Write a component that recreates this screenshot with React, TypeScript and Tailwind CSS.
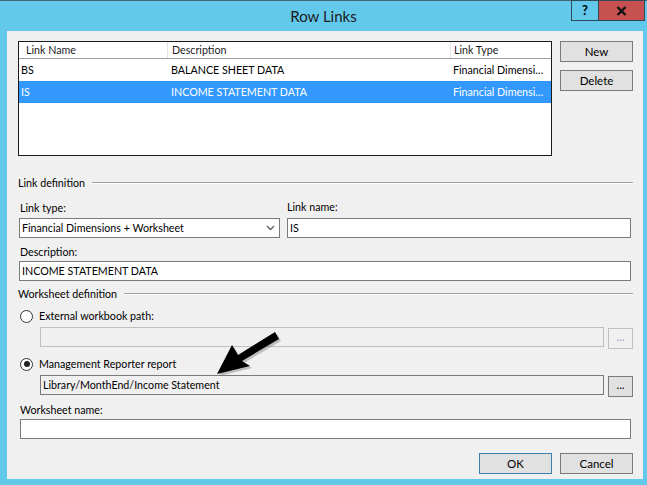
import React from 'react';

const rows = [
  { name: 'BS', desc: 'BALANCE SHEET DATA', type: 'Financial Dimensi\u2026', selected: false },
  { name: 'IS', desc: 'INCOME STATEMENT DATA', type: 'Financial Dimensi\u2026', selected: true },
];

function TitleBar() {
  return (
    <div className="h-[31px] grid grid-cols-[1fr_auto_1fr] border-t border-[#4a6470]">
      <div />
      <div className="pt-[5px] text-[15px] leading-[20px] text-[#1b1b1b]">Row Links</div>
      <div className="flex justify-end pr-[2px]">
        <div className="w-[28px] h-[21px] -mt-[1px] border border-[#2f4a56] flex items-center justify-center text-[13px] font-bold text-black leading-none">
          ?
        </div>
        <div className="w-[47px] h-[21px] -mt-[1px] -ml-[1px] bg-[#c75050] border border-[#2f4a56] flex items-center justify-center">
          <svg width="11" height="10" viewBox="0 0 11 10" aria-hidden>
            <path d="M1.5 1 L9.5 9 M9.5 1 L1.5 9" stroke="#111" strokeWidth="2.4" />
          </svg>
        </div>
      </div>
    </div>
  );
}

function Button({ label, primary = false, disabled = false, className = '' }: { label: string; primary?: boolean; disabled?: boolean; className?: string }) {
  const border = primary ? 'border-[#3c7fb1]' : disabled ? 'border-[#bfbfbf]' : 'border-[#7a7a7a]';
  const bg = disabled ? 'bg-[#f0f0f0]' : 'bg-[#e1e1e1]';
  const color = disabled ? 'text-[#a9a0c8]' : 'text-black';
  return (
    <div className={`border ${border} ${bg} ${color} flex items-center justify-center leading-none text-[11.5px] ${className}`}>
      {label}
    </div>
  );
}

function SectionHeader({ label }: { label: string }) {
  return (
    <div className="h-[16px] flex items-center">
      <span className="leading-none">{label}</span>
      <div className="flex-1 ml-[7px] h-0 border-t border-[#a0a0a0] border-b border-b-white" />
    </div>
  );
}

function Radio({ checked }: { checked: boolean }) {
  return (
    <div className="w-[13px] h-[13px] rounded-full border border-[#333] bg-white flex items-center justify-center">
      {checked && <div className="w-[6px] h-[6px] rounded-full bg-[#222]" />}
    </div>
  );
}

function Arrow() {
  const pts = '279,339 275,332 238,355 232,345 217,374 250,366 242,361';
  return (
    <svg className="absolute left-0 top-0 pointer-events-none" width="647" height="485" aria-hidden>
      <polygon points={pts} fill="#8a8a8a" opacity="0.5" transform="translate(2,2)" />
      <polygon points={pts} fill="#000" />
    </svg>
  );
}

export default function App() {
  return (
    <div className="relative w-[647px] h-[485px] overflow-hidden bg-[#63c9eb] font-['Lato',sans-serif] text-[10.7px] text-black">
      <TitleBar />
      <div className="ml-[7px] w-[636px] h-[448px] bg-[#f0f0f0] flex flex-col pl-[11px] pr-[10px] pt-[10px]">
        {/* link list + buttons */}
        <div className="flex">
          <div className="w-[534px] h-[115px] border border-[#1a1a1a] bg-white flex flex-col">
            <div className="h-[17px] flex border-b border-[#a0a0a0] text-[#1b1b1b]">
              <div className="w-[149px] pl-[7px] flex items-center border-r border-[#e5e5e5] leading-none">Link Name</div>
              <div className="w-[283px] pl-[4px] flex items-center border-r border-[#e5e5e5] leading-none">Description</div>
              <div className="flex-1 pl-[3px] flex items-center leading-none">Link Type</div>
            </div>
            {rows.map(r => (
              <div
                key={r.name}
                className={`h-[22px] flex items-center leading-none ${r.selected ? 'bg-[#3399ff] text-white' : ''}`}
              >
                <div className="w-[149px] pl-[2px]">{r.name}</div>
                <div className="w-[283px] pl-[3px]">{r.desc}</div>
                <div className="flex-1 pl-[2px] whitespace-nowrap">{r.type}</div>
              </div>
            ))}
          </div>
          <div className="ml-[8px] flex flex-col gap-[8px]">
            <Button label="New" className="w-[73px] h-[21px]" />
            <Button label="Delete" className="w-[73px] h-[21px]" />
          </div>
        </div>

        {/* link definition */}
        <div className="mt-[19px]">
          <SectionHeader label="Link definition" />
        </div>
        <div className="mt-[9px] flex">
          <div className="w-[261px] ml-[1px]">
            <div className="h-[16px] pl-[1px] flex items-center leading-none">Link type:</div>
            <div className="mt-[2px] h-[20px] border border-[#7a7a7a] bg-white flex items-center pl-[2px] pr-[4px] leading-none">
              <span className="flex-1">Financial Dimensions + Worksheet</span>
              <svg width="9" height="6" viewBox="0 0 9 6" aria-hidden>
                <path d="M1 1 L4.5 4.5 L8 1" stroke="#606060" strokeWidth="1.4" fill="none" />
              </svg>
            </div>
          </div>
          <div className="w-[344px] ml-[7px]">
            <div className="h-[16px] flex items-center leading-none -mt-[1px]">Link name:</div>
            <div className="mt-[3px] h-[20px] border border-[#7a7a7a] bg-white flex items-center pl-[2px] leading-none">IS</div>
          </div>
        </div>
        <div className="mt-[6px] h-[16px] pl-[2px] flex items-center leading-none">Description:</div>
        <div className="mt-[1px] ml-[1px] w-[612px] h-[20px] border border-[#7a7a7a] bg-white flex items-center pl-[2px] leading-none">
          INCOME STATEMENT DATA
        </div>

        {/* worksheet definition */}
        <div className="mt-[5px]">
          <SectionHeader label="Worksheet definition" />
        </div>
        <div className="mt-[6px] h-[16px] pl-[2px] flex items-center gap-[6px] leading-none">
          <Radio checked={false} />
          <span>External workbook path:</span>
        </div>
        <div className="mt-[3px] ml-[22px] flex gap-[4px]">
          <div className="w-[564px] h-[20px] border border-[#bfbfbf] bg-[#f0f0f0]" />
          <Button label="..." disabled className="w-[25px] h-[21px] mt-[1px] pb-[3px]" />
        </div>
        <div className="mt-[7px] h-[16px] pl-[2px] flex items-center gap-[6px] leading-none">
          <Radio checked />
          <span>Management Reporter report</span>
        </div>
        <div className="mt-[3px] ml-[22px] flex gap-[4px]">
          <div className="w-[564px] h-[20px] border border-[#7a7a7a] bg-[#f0f0f0] flex items-center pl-[2px] leading-none">
            Library/MonthEnd/Income Statement
          </div>
          <Button label="..." className="w-[25px] h-[21px] mt-[1px] pb-[3px]" />
        </div>
        <div className="mt-[5px] h-[16px] pl-[2px] flex items-center leading-none">Worksheet name:</div>
        <div className="mt-[1px] ml-[2px] w-[611px] h-[20px] border border-[#7a7a7a] bg-white" />

        {/* dialog buttons */}
        <div className="mt-[14px] flex justify-end gap-[8px]">
          <Button label="OK" primary className="w-[73px] h-[21px]" />
          <Button label="Cancel" className="w-[73px] h-[21px]" />
        </div>
      </div>
      <Arrow />
    </div>
  );
}
